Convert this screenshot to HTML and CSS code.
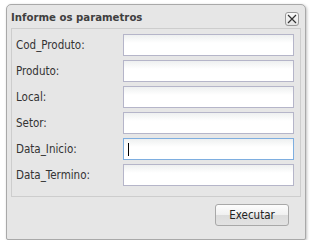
FILE: index.html
```html
<!DOCTYPE html>
<html>
<head>
<meta charset="utf-8">
<link rel="stylesheet" href="styles.css">
</head>
<body>
<div class="dialog">
  <div class="titlebar">
    <span class="title">Informe os parametros</span>
    <span class="close"><svg width="10" height="10" viewBox="0 0 10 10"><path d="M1 1L9 9M9 1L1 9" stroke="#333" stroke-width="1.2"/></svg></span>
  </div>
  <div class="panel">
    <div class="row"><label>Cod_Produto:</label><div class="input"></div></div>
    <div class="row"><label>Produto:</label><div class="input"></div></div>
    <div class="row"><label>Local:</label><div class="input"></div></div>
    <div class="row"><label>Setor:</label><div class="input"></div></div>
    <div class="row"><label>Data_Inicio:</label><div class="input focus"><span class="caret"></span></div></div>
    <div class="row"><label>Data_Termino:</label><div class="input"></div></div>
  </div>
  <div class="footer"><div class="btn">Executar</div></div>
</div>
</body>
</html>
```
FILE: styles.css
```css
html, body { margin: 0; padding: 0; background: #fff; }
body { padding: 4px 0 0 6px; font-family: "DejaVu Sans Condensed", "DejaVu Sans", sans-serif; }
.dialog {
  box-sizing: border-box;
  width: 300px; height: 236px;
  background: #e6e6e6;
  border: 1px solid #a9a9a9;
  border-radius: 5px 5px 2px 2px;
  box-shadow: 1px 1px 3px rgba(0,0,0,0.25);
  display: flex; flex-direction: column;
}
.titlebar {
  height: 23px;
  display: flex; align-items: center; justify-content: space-between;
  padding: 0 6px 0 4px;
}
.title { font-weight: bold; font-size: 11.3px; color: #3f3f3f; margin-top: 1px; }
.close {
  box-sizing: border-box;
  width: 14px; height: 14px;
  border: 1px solid #9a9a9a; border-radius: 3px;
  background: linear-gradient(#fafafa, #e4e4e4);
  display: flex; align-items: center; justify-content: center;
  margin-top: 4px;
}
.close svg { width: 10px; height: 10px; }
.panel {
  margin: 0 4px;
  border: 1px solid #cdcdcd;
  padding: 5px 6px 10px 4px;
  display: flex; flex-direction: column; gap: 4px;
}
.row { display: flex; align-items: center; justify-content: space-between; height: 22px; }
label { font-size: 11.5px; color: #333; }
.input {
  box-sizing: border-box;
  width: 171px; height: 22px;
  border: 1px solid #b5b5c9;
  background: linear-gradient(#eef0f0, #fff 8px);
  position: relative;
}
.input.focus { border-color: #7eaee0; }
.caret { position: absolute; left: 4px; top: 4px; width: 1px; height: 13px; background: #000; }
.footer { display: flex; justify-content: flex-end; padding: 7px 16px 0 0; }
.btn {
  box-sizing: border-box;
  width: 74px; height: 22px;
  border: 1px solid #a8a8a8; border-radius: 3px;
  background: linear-gradient(#fdfdfd 0, #f0f0f0 50%, #dcdcdc 51%, #e2e2e2 100%);
  font-size: 11.5px; color: #222;
  display: flex; align-items: center; justify-content: center;
}
```
